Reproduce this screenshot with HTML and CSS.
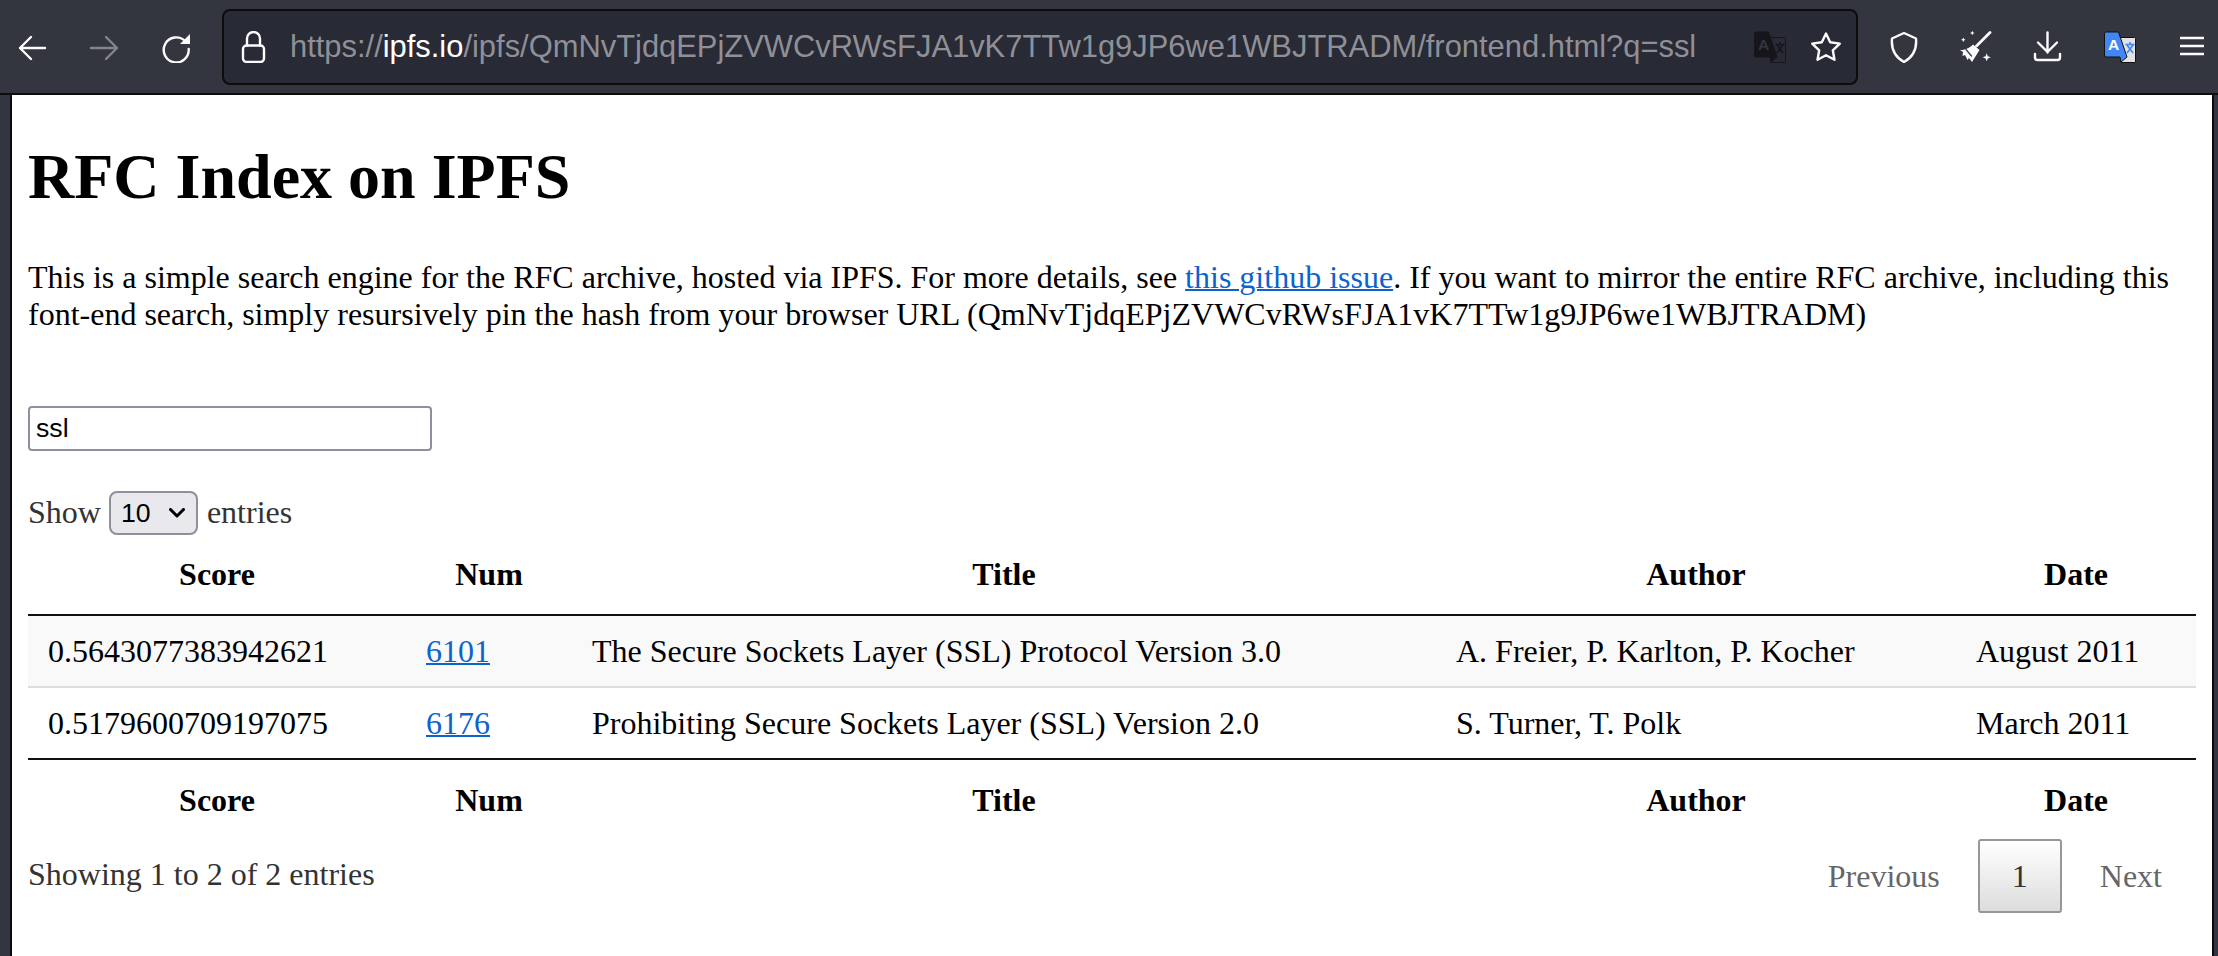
FILE: index.html
```html
<!DOCTYPE html>
<html lang="en">
<head>
  <meta charset="UTF-8">
  <meta name="viewport" content="width=device-width, initial-scale=1">
  <title>RFC Index on IPFS</title>
  <link rel="stylesheet" href="styles.css">
</head>
<body>
  <header class="toolbar">
    <div class="nav-buttons">
      <svg class="icon" viewBox="0 0 32 32"><path d="M29 17H4M15 6 4 17l11 11"/></svg>
      <svg class="icon dim" viewBox="0 0 32 32"><path d="M3 17h26M18 6l11 11-11 11"/></svg>
      <svg class="icon" viewBox="0 0 32 32"><path d="M25 10a12.500 12.500 0 1 0 3.700 8"/><path class="solid" d="M30 3v10H20z"/></svg>
    </div>
    <div class="urlbar">
      <svg class="icon lock" viewBox="0 -1 32 32"><rect x="6" y="13.500" width="21" height="16.500" rx="3.500"/><path d="M10 13.500V6.500a6.500 6.500 0 0 1 13 0v7"/></svg>
      <div class="url"><span class="url-dim">https://</span>ipfs.io<span class="url-dim">/ipfs/QmNvTjdqEPjZVWCvRWsFJA1vK7TTw1g9JP6we1WBJTRADM/frontend.html?q=ssl</span></div>
      <svg class="translate dark" viewBox="0 0 32 32"><path class="paper" d="M15 6.500h15.500a1 1 0 0 1 1 1V31a.5.5 0 0 1-.5.5H17z"/><path class="blue" d="M3 1h11.500L23 26l-6 5-1-5H2.500a2 2 0 0 1-2-2V3A2 2 0 0 1 3 1z"/><text class="letter" x="4" y="19">A</text><path class="glyph" d="M21.500 13.500h9M26 11v2.500M23 14l6 8M29 14l-6 8"/></svg>
      <svg class="icon star" viewBox="0 0 32 32"><path d="m16 2.500 4.200 8.800 9.600 1.300-7 6.700 1.700 9.500-8.500-4.600-8.500 4.600 1.700-9.500-7-6.700 9.600-1.300z"/></svg>
    </div>
    <div class="tools">
      <svg class="icon" viewBox="0 0 32 32"><path d="M16 2 28 7.500C29 18 25 26 16 31 7 26 3 18 4 7.500z"/></svg>
      <svg class="icon" viewBox="0 0 32 32"><path class="handle" d="M30 1.500 16.500 15"/><path class="solid" d="M13 13.500 19.500 19 12 31l-3-4-1.500 2L5 24l-2.500 1 .5-4-3-2c5 0 10-2 13-5.500z"/><path class="cut" d="m6 18.500 5.500 6.500"/><path class="solid" d="m12.300 -.2.700 1.500 1.500.7-1.500.7-.7 1.500-.7-1.500-1.500-.7 1.500-.7zM3.300 6.500l.7 1.500 1.500.7-1.500.7-.7 1.500-.7-1.500-1.500-.7 1.500-.7zM26.700 22.300l1.100 2.900 3 1.100-3 1.100-1.100 2.900-1.100-2.900-3-1.100 3-1.100z"/></svg>
      <svg class="icon" viewBox="0 0 32 32"><path d="M15.500 1.500v20M6 11.500l9.500 9.500 9.500-9.500M3 23v3.500A2.500 2.500 0 0 0 5.500 29h20a2.500 2.500 0 0 0 2.500-2.500V23"/></svg>
      <svg class="translate" viewBox="0 0 32 32"><path class="paper" d="M15 6.500h15.500a1 1 0 0 1 1 1V31a.5.5 0 0 1-.5.5H17z"/><path class="blue" d="M3 1h11.500L23 26l-6 5-1-5H2.500a2 2 0 0 1-2-2V3A2 2 0 0 1 3 1z"/><text class="letter" x="4" y="19">A</text><path class="glyph" d="M21.500 13.500h9M26 11v2.500M23 14l6 8M29 14l-6 8"/></svg>
      <svg class="icon menu" viewBox="0 0 32 32"><path d="M4 7h24M4 15h24M4 23h24"/></svg>
    </div>
  </header>

  <main class="page">
    <h1>RFC Index on IPFS</h1>
    <p class="intro">This is a simple search engine for the RFC archive, hosted via IPFS. For more details, see <a href="#">this github issue</a>. If you want to mirror the entire RFC archive, including this font-end search, simply resursively pin the hash from your browser URL (QmNvTjdqEPjZVWCvRWsFJA1vK7TTw1g9JP6we1WBJTRADM)</p>

    <div class="search">ssl</div>

    <div class="length">Show <span class="select">10 <svg viewBox="0 0 16 10"><path d="m1.500 1.500 6.500 6.500 6.500-6.500"/></svg></span> entries</div>

    <table class="results">
      <colgroup>
        <col class="col-score">
        <col class="col-num">
        <col class="col-title">
        <col class="col-author">
        <col class="col-date">
      </colgroup>
      <thead>
        <tr>
          <th>Score</th>
          <th>Num</th>
          <th>Title</th>
          <th>Author</th>
          <th>Date</th>
        </tr>
      </thead>
      <tbody>
        <tr class="odd">
          <td>0.5643077383942621</td>
          <td><a href="#">6101</a></td>
          <td>The Secure Sockets Layer (SSL) Protocol Version 3.0</td>
          <td>A. Freier, P. Karlton, P. Kocher</td>
          <td>August 2011</td>
        </tr>
        <tr>
          <td>0.5179600709197075</td>
          <td><a href="#">6176</a></td>
          <td>Prohibiting Secure Sockets Layer (SSL) Version 2.0</td>
          <td>S. Turner, T. Polk</td>
          <td>March 2011</td>
        </tr>
      </tbody>
      <tfoot>
        <tr>
          <th>Score</th>
          <th>Num</th>
          <th>Title</th>
          <th>Author</th>
          <th>Date</th>
        </tr>
      </tfoot>
    </table>

    <div class="table-footer">
      <div class="info">Showing 1 to 2 of 2 entries</div>
      <div class="paging">
        <span class="page-link">Previous</span>
        <span class="page-current">1</span>
        <span class="page-link">Next</span>
      </div>
    </div>
  </main>
</body>
</html>
```

FILE: styles.css
```css
* {
  box-sizing: border-box;
}
html, body {
  height: 100%;
}
body {
  margin: 0;
  display: flex;
  flex-direction: column;
  overflow: hidden;
  background-color: #33363f;
  font-family: "Liberation Serif", serif;
  font-size: 32px;
  color: #000;
}

/* browser toolbar */
.toolbar {
  display: flex;
  align-items: center;
  flex: none;
  height: 95px;
  padding: 9px 0 8px 16px;
  background-color: #33363f;
  border-bottom: 2px solid #0c0c0d;
}
.nav-buttons {
  display: flex;
  gap: 40px;
}
.icon {
  display: block;
  flex: none;
  width: 32px;
  height: 32px;
  fill: none;
  stroke: #fbfbfe;
  stroke-width: 2.4;
  stroke-linejoin: round;
  stroke-linecap: round;
}
.icon.dim {
  opacity: 0.4;
}
.icon .solid {
  fill: #fbfbfe;
  stroke: none;
}
.icon .handle {
  stroke-width: 2.8;
}
.icon .cut {
  stroke: #33363f;
  stroke-width: 1.2;
}
.icon.menu {
  stroke-linecap: butt;
}
.urlbar {
  display: flex;
  align-items: center;
  flex: none;
  width: 1636px;
  height: 76px;
  margin-left: 30px;
  padding: 0 14px 0 13px;
  background-color: #282a35;
  border: 2px solid #0c0c0d;
  border-radius: 8px;
}
.lock {
  margin-right: 21px;
}
.url {
  flex: 1;
  font-family: "Liberation Sans", sans-serif;
  font-size: 30.9px;
  color: #fff;
  white-space: nowrap;
}
.url-dim {
  color: #8f9097;
}
.star {
  margin-left: 24px;
}
.tools {
  display: flex;
  align-items: center;
  gap: 40px;
  margin-left: 30px;
}
.translate {
  display: block;
  flex: none;
  width: 32px;
  height: 32px;
}
.translate .paper {
  fill: #e2e2e4;
  stroke: #111;
  stroke-width: 1;
}
.translate .blue {
  fill: #4285f4;
  stroke: #111;
  stroke-width: 1;
}
.translate .letter {
  font-family: "Liberation Sans", sans-serif;
  font-size: 15.5px;
  font-weight: bold;
  fill: #fff;
}
.translate .glyph {
  fill: none;
  stroke: #4285f4;
  stroke-width: 1.6;
}
.translate.dark .paper {
  fill: #282a35;
  stroke: #15151b;
}
.translate.dark .blue {
  fill: #15151b;
  stroke: #15151b;
}
.translate.dark .letter {
  fill: #33353f;
}
.translate.dark .glyph {
  stroke: #15151b;
}

/* page inside the window frame */
.page {
  flex: 1;
  margin: 0 4px 0 10px;
  padding: 0 16px;
  background-color: #fff;
  border-left: 2px solid #0c0c0d;
  border-right: 2px solid #0c0c0d;
}
h1 {
  margin: 47px 0 47px;
  font-size: 64px;
  line-height: 70px;
}
.intro {
  margin: 0 0 73px;
  line-height: 37px;
}
a {
  color: #0b63ce;
  text-decoration-thickness: 2px;
}
.search {
  display: flex;
  align-items: center;
  width: 404px;
  height: 45px;
  padding: 0 6px;
  border: 2px solid #8f8f9d;
  border-radius: 4px;
  font-family: "Liberation Sans", sans-serif;
  font-size: 26.67px;
}
.length {
  display: flex;
  align-items: center;
  gap: 8px;
  margin-top: 38px;
  color: #333;
}
.select {
  display: flex;
  align-items: center;
  justify-content: space-between;
  width: 89px;
  height: 44px;
  margin: 2px 1px 0 0;
  padding: 0 11px 0 10px;
  background-color: #e9e9ed;
  border: 2px solid #8f8f9d;
  border-radius: 8px;
  font-family: "Liberation Sans", sans-serif;
  font-size: 26.67px;
  color: #000;
}
.select svg {
  width: 16px;
  height: 10px;
  fill: none;
  stroke: #000;
  stroke-width: 3;
  stroke-linecap: round;
  stroke-linejoin: round;
}
.results {
  width: 2168px;
  margin-top: 9px;
  table-layout: fixed;
  border-collapse: separate;
  border-spacing: 0;
}
.col-score { width: 378px; }
.col-num { width: 166px; }
.col-title { width: 864px; }
.col-author { width: 520px; }
.col-date { width: 240px; }
th {
  font-weight: bold;
}
thead th {
  height: 72px;
  padding-bottom: 10px;
  border-bottom: 2px solid #111;
}
tfoot th {
  height: 81px;
  padding-top: 2px;
  border-top: 2px solid #111;
}
td {
  height: 72px;
  padding: 0 20px;
  border-top: 2px solid #ddd;
}
tbody tr:first-child td {
  height: 70px;
  border-top: none;
}
.odd td {
  background-color: #f9f9f9;
}
.table-footer {
  display: flex;
  justify-content: space-between;
  align-items: center;
  color: #333;
}
.info {
  margin-top: -3px;
}
.paging {
  display: flex;
  align-items: center;
  gap: 38px;
  margin-right: 34px;
}
.page-link {
  color: #666;
}
.page-current {
  display: flex;
  align-items: center;
  justify-content: center;
  width: 84px;
  height: 74px;
  border: 2px solid #979797;
  border-radius: 3px;
  background: linear-gradient(to bottom, #fff, #dcdcdc);
}
```
